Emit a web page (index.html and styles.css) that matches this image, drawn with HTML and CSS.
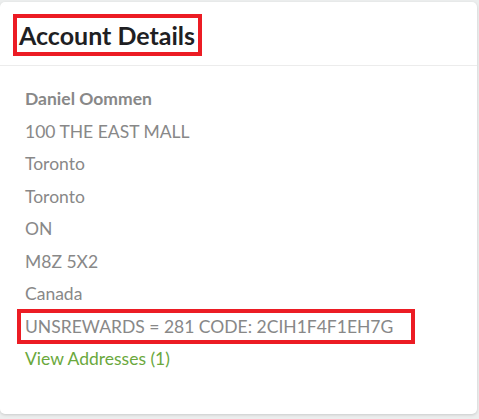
FILE: index.html
```html
<!DOCTYPE html>
<html lang="en">
<head>
  <meta charset="UTF-8">
  <title>Account Details</title>
  <link rel="stylesheet" href="styles.css">
</head>
<body>
  <div class="page">
    <div class="card">
      <div class="card-header">
        <h2><span class="mark">Account Details</span></h2>
      </div>
      <div class="card-body">
        <div class="line name">Daniel Oommen</div>
        <div class="line">100 THE EAST MALL</div>
        <div class="line">Toronto</div>
        <div class="line">Toronto</div>
        <div class="line">ON</div>
        <div class="line">M8Z 5X2</div>
        <div class="line">Canada</div>
        <div class="line"><span class="mark mark-line">UNSREWARDS = 281 CODE: 2CIH1F4F1EH7G</span></div>
        <div class="line"><a href="#" class="link">View Addresses (1)</a></div>
      </div>
    </div>
  </div>
</body>
</html>
```

FILE: styles.css
```css
* {
  margin: 0;
  padding: 0;
  box-sizing: border-box;
}

body {
  background: #eceeee;
  font-family: Lato, "Open Sans", sans-serif;
}

.page {
  padding: 2px 2px 4px 0;
}

.card {
  background: #fff;
  border-radius: 5px;
  box-shadow: 0 1px 3px rgba(0, 0, 0, 0.15);
  height: 412px;
}

.card-header {
  height: 64px;
  border-bottom: 1px solid #ececec;
  padding: 12px 0 0 13px;
}

.card-header h2 {
  font-size: 25px;
  font-weight: bold;
  color: #1f1f23;
  line-height: 34px;
}

/* recuadro rojo de anotación */
.mark {
  display: inline-block;
  border: 4px solid #ec1c24;
  padding: 0 3px 0 2px;
}

.card-body {
  padding: 17px 0 0 25px;
}

.line {
  font-size: 17.5px;
  line-height: 32.5px;
  color: #888;
}

.line.name {
  font-weight: bold;
}

.mark-line {
  line-height: 27px;
  margin: -1.5px 0 -1px -8px;
  padding: 0 18px 0 4px;
  vertical-align: top;
}

.link {
  color: #6aa83c;
  text-decoration: none;
}
```
